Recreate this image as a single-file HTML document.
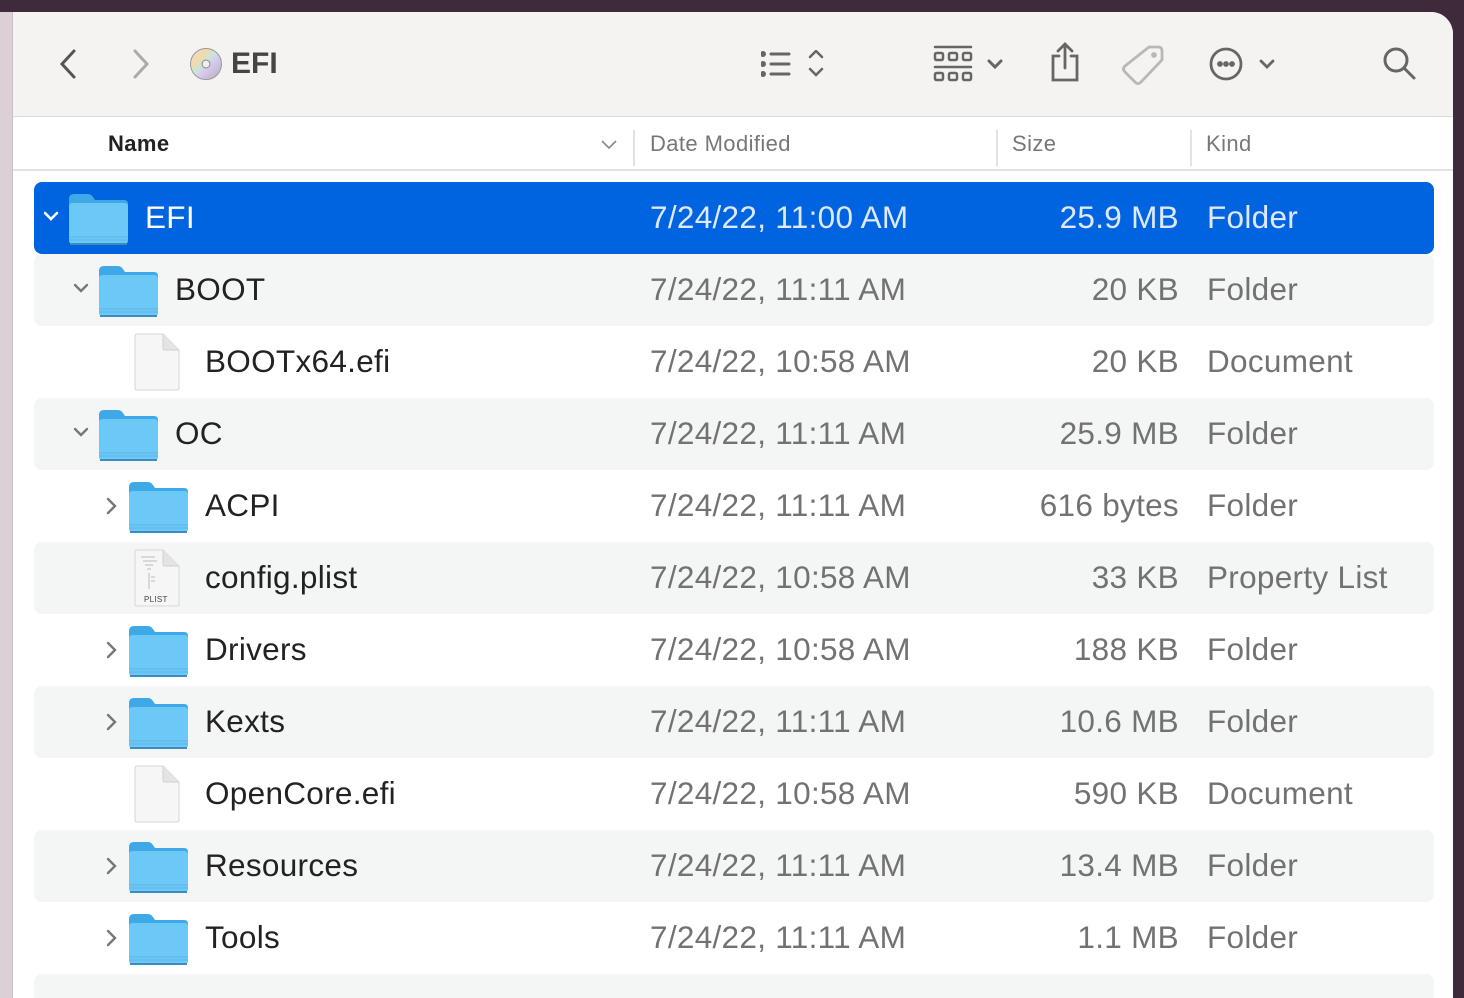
<!DOCTYPE html>
<html style="width:1464px;height:998px;overflow:hidden"><head><meta charset="utf-8"><style>
*{margin:0;padding:0;box-sizing:border-box}
body{width:1464px;height:998px;overflow:hidden;background:#3e2a3b;font-family:"Liberation Sans",sans-serif;position:relative}
.lstrip{position:absolute;left:0;top:12px;width:13px;height:986px;background:#dccfd6;border-right:1px solid #c9c0c5}
.win{position:absolute;left:13px;top:12px;width:1440px;height:986px;background:#fff;border-top-right-radius:22px;overflow:hidden}
.tb{position:absolute;left:0;top:0;width:100%;height:105px;background:#f4f3f1;border-bottom:1px solid #dcdcdc}
.hdr{position:absolute;left:0;top:106px;width:100%;height:53px;border-bottom:2px solid #e3e3e3;font-size:22px;letter-spacing:0.4px;color:#777}
.hdr span{position:absolute;top:13px}
.sep{position:absolute;top:12px;width:2px;height:36px;background:#e2e2e2}
.row{position:absolute;left:21px;width:1400px;height:72px;border-radius:8px;font-size:31.5px;letter-spacing:0.3px;color:#222}
.row.s{background:#f4f5f5}
.row.sel{background:#0064e1;color:#fff}
.row .n,.row .d,.row .z,.row .k{position:absolute;top:17px;white-space:nowrap}
.row .d{left:616px;color:#727272}.row .z{right:255px;color:#727272;text-align:right}.row .k{left:1173px;color:#727272}
.row.sel .d,.row.sel .z,.row.sel .k{color:#dfe9fb}
.chev{position:absolute;top:26px}
.ic{position:absolute}
</style></head><body>
<div class="lstrip"></div>
<div class="win">
<div class="tb">
<svg style="position:absolute;left:45px;top:36px" width="20" height="32"><path d="M16 3 L4 16 L16 29" stroke="#555" stroke-width="3" fill="none" stroke-linecap="round"/></svg>
<svg style="position:absolute;left:118px;top:36px" width="20" height="32"><path d="M4 3 L16 16 L4 29" stroke="#aaa" stroke-width="3" fill="none" stroke-linecap="round"/></svg>
<svg style="position:absolute;left:176px;top:35px" width="34" height="34"><defs><linearGradient id="cd" x1="0" y1="0" x2="1" y2="1"><stop offset="0" stop-color="#e0e0e0"/><stop offset="0.3" stop-color="#f4d9a8"/><stop offset="0.45" stop-color="#c8e8d8"/><stop offset="0.6" stop-color="#d8c8f0"/><stop offset="1" stop-color="#b0b0b0"/></linearGradient></defs><circle cx="17" cy="17" r="15.5" fill="url(#cd)" stroke="#999"/><circle cx="17" cy="17" r="4" fill="#eee" stroke="#888"/></svg>
<div style="position:absolute;left:218px;top:35px;font-size:30px;font-weight:bold;color:#444">EFI</div>
<svg style="position:absolute;left:748px;top:38px" width="80" height="30" fill="none" stroke="#666" stroke-width="3" stroke-linecap="round"><circle cx="2" cy="4" r="1.5" fill="#666"/><circle cx="2" cy="14" r="1.5" fill="#666"/><circle cx="2" cy="24" r="1.5" fill="#666"/><path d="M10 4H28M10 14H28M10 24H28"/><path d="M49 7L55 1L61 7M49 19L55 25L61 19" stroke-width="2.5"/></svg>
<svg style="position:absolute;left:920px;top:33px" width="80" height="40" fill="none" stroke="#666" stroke-width="2.5"><path d="M2 2H38M2 22H38" stroke-linecap="round"/><rect x="2" y="8" width="8" height="7" rx="1.5"/><rect x="16" y="8" width="8" height="7" rx="1.5"/><rect x="30" y="8" width="8" height="7" rx="1.5"/><rect x="2" y="28" width="8" height="7" rx="1.5"/><rect x="16" y="28" width="8" height="7" rx="1.5"/><rect x="30" y="28" width="8" height="7" rx="1.5"/><path d="M56 16L62 22L68 16" stroke-width="3" stroke-linecap="round"/></svg>
<svg style="position:absolute;left:1035px;top:30px" width="34" height="42" fill="none" stroke="#666" stroke-width="2.8" stroke-linecap="round"><path d="M11 14H5V38H29V14H23M17 2V26M10 9L17 2L24 9"/></svg>
<svg style="position:absolute;left:1108px;top:32px" width="44" height="42" fill="none" stroke="#b8b8b8" stroke-width="2.8"><path d="M28 3H37Q41 3 41 7V16L20 38Q17 41 14 38L4 28Q1 25 4 22Z"/><circle cx="33" cy="11" r="1.5" fill="#b8b8b8"/></svg>
<svg style="position:absolute;left:1196px;top:35px" width="72" height="34" fill="none" stroke="#666" stroke-width="2.8"><circle cx="17" cy="17" r="15"/><circle cx="11" cy="17" r="1.5" fill="#666"/><circle cx="17" cy="17" r="1.5" fill="#666"/><circle cx="23" cy="17" r="1.5" fill="#666"/><path d="M52 14L58 20L64 14" stroke-linecap="round"/></svg>
<svg style="position:absolute;left:1368px;top:33px" width="38" height="38" fill="none" stroke="#666" stroke-width="3" stroke-linecap="round"><circle cx="15" cy="15" r="11"/><path d="M23 23L33 33"/></svg>
</div>
<div class="hdr">
<span style="left:95px;color:#222;font-weight:bold">Name</span>
<svg style="position:absolute;left:588px;top:22px" width="16" height="10"><path d="M1 1L8 8L15 1" stroke="#888" stroke-width="1.6" fill="none"/></svg>
<div class="sep" style="left:620px"></div>
<span style="left:637px">Date Modified</span>
<div class="sep" style="left:983px"></div>
<span style="left:999px">Size</span>
<div class="sep" style="left:1177px"></div>
<span style="left:1193px">Kind</span>
</div>
</div>

<svg width="0" height="0" style="position:absolute"><defs>
<g id="fold"><path d="M1 7Q1 2 6 2H20Q23 2 25 5L27 8H56Q60 8 60 12V48Q60 52 56 52H5Q1 52 1 48Z" fill="#3ea9e6"/><path d="M1 14Q1 11 5 11H56Q60 11 60 14V48Q60 52 56 52H5Q1 52 1 48Z" fill="#6cc9f7"/><path d="M1 45H60M1 48H60" stroke="#5bb5e6" stroke-width="1"/><path d="M2 52H59" stroke="#3b8cc0" stroke-width="2"/></g>
<g id="doc"><path d="M2 3Q2 1 4 1H30L46 17V55Q46 57 44 57H4Q2 57 2 55Z" fill="#f6f6f6" stroke="#d6d6d6"/><path d="M30 1V15Q30 17 32 17H46" fill="#e4e4e4" stroke="#d0d0d0"/></g>
</defs></svg>

<div style="position:absolute;left:13px;top:170px;width:1440px;height:828px;overflow:hidden">
<div class="row sel" style="top:12px"><svg class="chev" style="left:9px;top:29px" width="16" height="12"><path d="M2 2L8 8L14 2" stroke="#fff" stroke-width="2.6" fill="none" stroke-linecap="round"/></svg><svg class="ic" style="left:34px;top:10px" width="62" height="55"><use href="#fold"/></svg><span class="n" style="left:111px">EFI</span><span class="d">7/24/22, 11:00 AM</span><span class="z">25.9 MB</span><span class="k">Folder</span></div>
<div class="row s" style="top:84px"><svg class="chev" style="left:39px;top:29px" width="16" height="12"><path d="M2 2L8 8L14 2" stroke="#777" stroke-width="2.4" fill="none" stroke-linecap="round"/></svg><svg class="ic" style="left:64px;top:10px" width="62" height="55"><use href="#fold"/></svg><span class="n" style="left:141px">BOOT</span><span class="d">7/24/22, 11:11 AM</span><span class="z">20 KB</span><span class="k">Folder</span></div>
<div class="row" style="top:156px"><svg class="ic" style="left:99px;top:7px" width="48" height="59"><use href="#doc"/></svg><span class="n" style="left:171px">BOOTx64.efi</span><span class="d">7/24/22, 10:58 AM</span><span class="z">20 KB</span><span class="k">Document</span></div>
<div class="row s" style="top:228px"><svg class="chev" style="left:39px;top:29px" width="16" height="12"><path d="M2 2L8 8L14 2" stroke="#777" stroke-width="2.4" fill="none" stroke-linecap="round"/></svg><svg class="ic" style="left:64px;top:10px" width="62" height="55"><use href="#fold"/></svg><span class="n" style="left:141px">OC</span><span class="d">7/24/22, 11:11 AM</span><span class="z">25.9 MB</span><span class="k">Folder</span></div>
<div class="row" style="top:300px"><svg class="chev" style="left:72px;top:27px" width="12" height="18"><path d="M2 2L9 9L2 16" stroke="#777" stroke-width="2.4" fill="none" stroke-linecap="round"/></svg><svg class="ic" style="left:94px;top:10px" width="62" height="55"><use href="#fold"/></svg><span class="n" style="left:171px">ACPI</span><span class="d">7/24/22, 11:11 AM</span><span class="z">616 bytes</span><span class="k">Folder</span></div>
<div class="row s" style="top:372px"><svg class="ic" style="left:99px;top:7px" width="48" height="59"><use href="#doc"/><path d="M8 8H22M10 12H24M12 16H20M14 20H18M16 24V40M18 28H22M18 32H22" stroke="#bbb" stroke-width="1"/><text x="11" y="53" font-size="8" fill="#444" font-family="Liberation Sans">PLIST</text></svg><span class="n" style="left:171px">config.plist</span><span class="d">7/24/22, 10:58 AM</span><span class="z">33 KB</span><span class="k">Property List</span></div>
<div class="row" style="top:444px"><svg class="chev" style="left:72px;top:27px" width="12" height="18"><path d="M2 2L9 9L2 16" stroke="#777" stroke-width="2.4" fill="none" stroke-linecap="round"/></svg><svg class="ic" style="left:94px;top:10px" width="62" height="55"><use href="#fold"/></svg><span class="n" style="left:171px">Drivers</span><span class="d">7/24/22, 10:58 AM</span><span class="z">188 KB</span><span class="k">Folder</span></div>
<div class="row s" style="top:516px"><svg class="chev" style="left:72px;top:27px" width="12" height="18"><path d="M2 2L9 9L2 16" stroke="#777" stroke-width="2.4" fill="none" stroke-linecap="round"/></svg><svg class="ic" style="left:94px;top:10px" width="62" height="55"><use href="#fold"/></svg><span class="n" style="left:171px">Kexts</span><span class="d">7/24/22, 11:11 AM</span><span class="z">10.6 MB</span><span class="k">Folder</span></div>
<div class="row" style="top:588px"><svg class="ic" style="left:99px;top:7px" width="48" height="59"><use href="#doc"/></svg><span class="n" style="left:171px">OpenCore.efi</span><span class="d">7/24/22, 10:58 AM</span><span class="z">590 KB</span><span class="k">Document</span></div>
<div class="row s" style="top:660px"><svg class="chev" style="left:72px;top:27px" width="12" height="18"><path d="M2 2L9 9L2 16" stroke="#777" stroke-width="2.4" fill="none" stroke-linecap="round"/></svg><svg class="ic" style="left:94px;top:10px" width="62" height="55"><use href="#fold"/></svg><span class="n" style="left:171px">Resources</span><span class="d">7/24/22, 11:11 AM</span><span class="z">13.4 MB</span><span class="k">Folder</span></div>
<div class="row" style="top:732px"><svg class="chev" style="left:72px;top:27px" width="12" height="18"><path d="M2 2L9 9L2 16" stroke="#777" stroke-width="2.4" fill="none" stroke-linecap="round"/></svg><svg class="ic" style="left:94px;top:10px" width="62" height="55"><use href="#fold"/></svg><span class="n" style="left:171px">Tools</span><span class="d">7/24/22, 11:11 AM</span><span class="z">1.1 MB</span><span class="k">Folder</span></div>
<div class="row s" style="top:804px"></div>
</div>
</body></html>
